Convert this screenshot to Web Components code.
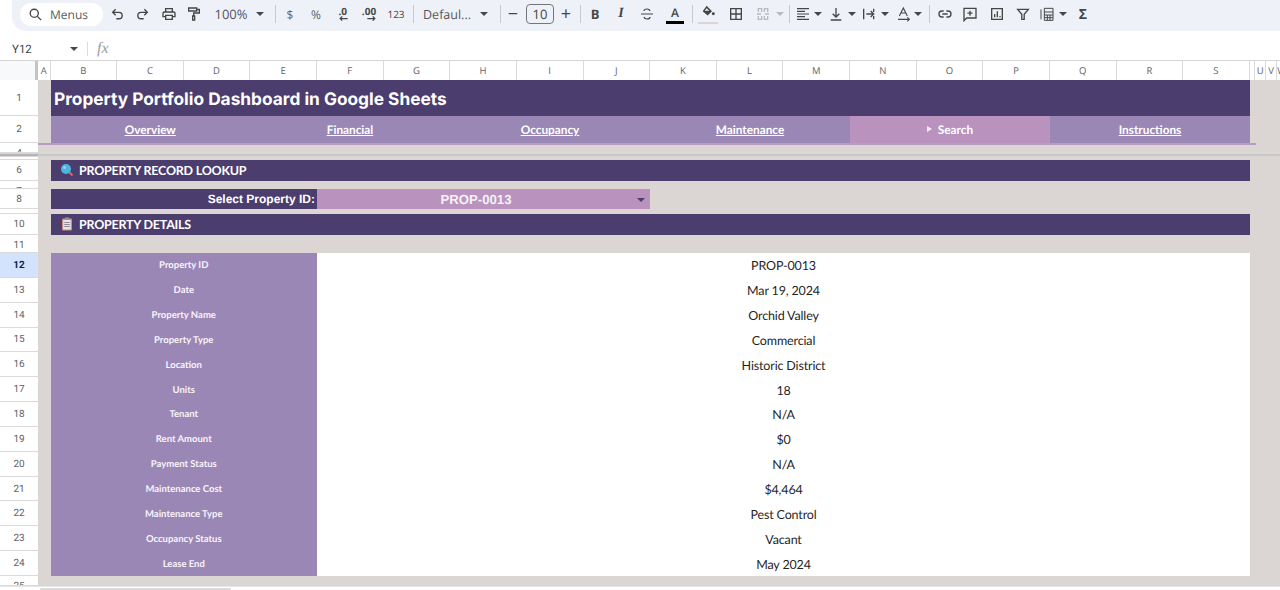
<!DOCTYPE html>
<html>
<head>
<meta charset="utf-8">
<title>Property Portfolio Dashboard</title>
<style>
  html, body { margin: 0; height: 590px; overflow: hidden; background: #fff; font-family: Roboto, "Liberation Sans", sans-serif; text-rendering: geometricPrecision; }
  body { display: flex; flex-direction: column; }
</style>
</head>
<body>
<sheet-toolbar></sheet-toolbar>
<formula-bar cell="Y12"></formula-bar>
<column-header></column-header>

<sheet-pane rows="1:36,2:27,4:10">
  <title-row>Property Portfolio Dashboard in Google Sheets</title-row>
  <nav-tabs>
    <nav-tab>Overview</nav-tab>
    <nav-tab>Financial</nav-tab>
    <nav-tab>Occupancy</nav-tab>
    <nav-tab>Maintenance</nav-tab>
    <nav-tab active>Search</nav-tab>
    <nav-tab>Instructions</nav-tab>
  </nav-tabs>
</sheet-pane>

<freeze-bar></freeze-bar>

<sheet-pane rows=":3,6:21,7:8,8:20,9:5,10:21,11:18,12:24.85,13:24.85,14:24.85,15:24.85,16:24.85,17:24.85,18:24.85,19:24.85,20:24.85,21:24.85,22:24.85,23:24.85,24:24.85,25:10" selected="12">
  <section-bar icon="search" style="margin-top:3px">PROPERTY RECORD LOOKUP</section-bar>
  <lookup-row label="Select Property ID:" value="PROP-0013" style="margin-top:8px"></lookup-row>
  <section-bar icon="clipboard" style="margin-top:5px">PROPERTY DETAILS</section-bar>
  <detail-table style="margin-top:18px">
    <detail-row label="Property ID" value="PROP-0013"></detail-row>
    <detail-row label="Date" value="Mar 19, 2024"></detail-row>
    <detail-row label="Property Name" value="Orchid Valley"></detail-row>
    <detail-row label="Property Type" value="Commercial"></detail-row>
    <detail-row label="Location" value="Historic District"></detail-row>
    <detail-row label="Units" value="18"></detail-row>
    <detail-row label="Tenant" value="N/A"></detail-row>
    <detail-row label="Rent Amount" value="$0"></detail-row>
    <detail-row label="Payment Status" value="N/A"></detail-row>
    <detail-row label="Maintenance Cost" value="$4,464"></detail-row>
    <detail-row label="Maintenance Type" value="Pest Control"></detail-row>
    <detail-row label="Occupancy Status" value="Vacant"></detail-row>
    <detail-row label="Lease End" value="May 2024"></detail-row>
  </detail-table>
</sheet-pane>

<h-scroll></h-scroll>

<script>
const INK = '#444746';
const stroke = (d, w = 1.8) => `<svg width="16" height="16" viewBox="0 0 24 24" fill="none" stroke="${INK}" stroke-width="${w}">${d}</svg>`;
const caret = (c = INK) => `<svg width="8" height="4" viewBox="0 0 8 4"><path d="M0 0h8L4 4z" fill="${c}"/></svg>`;

const ICONS = {
  undo: stroke('<path d="M10 5 5.5 9.5 10 14M5.5 9.5H15a4.8 4.8 0 0 1 0 9.6h-4"/>', 2),
  redo: stroke('<path d="M14 5l4.500 4.500L14 14M18.500 9.500H9a4.800 4.800 0 0 0 0 9.600h4"/>', 2),
  print: `<svg width="16" height="16" viewBox="0 0 24 24" fill="${INK}"><path d="M19 8h-1V3H6v5H5c-1.660 0-3 1.340-3 3v6h4v4h12v-4h4v-6c0-1.660-1.340-3-3-3zM8 5h8v3H8V5zm8 14H8v-4h8v4zm4-4h-2v-2H6v2H4v-4c0-.550.450-1 1-1h14c.550 0 1 .450 1 1v4z"/></svg>`,
  paint: stroke('<path d="M4 3h12v4.500H4zM16 5.200h4v5.300H11.500V15M10 15h3v6h-3z"/>', 2),
  borders: stroke('<path d="M4 4h16v16H4zM12 4v16M4 12h16"/>', 2),
  merge: `<svg width="16" height="16" viewBox="0 0 24 24" fill="none" stroke="#b8bbbd" stroke-width="2"><path d="M5 9V4h5v5M14 9V4h5v5M5 15v5h5v-5M14 15v5h5v-5M3 12h6M15 12h6"/></svg>`,
  align: stroke('<path d="M3 4h18M3 8h12M3 12h18M3 16h12M3 20h18"/>', 1.7),
  valign: stroke('<path d="M12 3v13M7 11.500l5 5 5-5M4 21h16"/>', 2),
  wrap: stroke('<path d="M4 4v16M19 4v5M19 15v5M8 12h11M14.500 7.500 19 12l-4.500 4.500"/>', 2),
  rotate: stroke('<path d="M5 15 11 3l6 12M7.500 10.500h7M3 20h17M17 17l3 3-3 3"/>', 1.7),
  link: stroke('<path d="M10 7.500H7.500a4.500 4.500 0 0 0 0 9H10M14 7.500h2.500a4.500 4.500 0 0 1 0 9H14M8 12h8"/>', 2),
  comment: stroke('<path d="M3 3.500h18v14.500H7l-4 4zM12 7v7.500M8.200 10.700h7.600"/>', 2),
  chart: stroke('<path d="M4 4h16v16H4zM8.500 17v-5M12.500 17V8M16.500 17v-2"/>', 2),
  filter: stroke('<path d="M4 5h16l-6.200 7.500V20h-3.600v-7.500z"/>', 2),
  functions: stroke('<path d="M3 5v15M8 3.500h13v18H8zM8 9h13M8 13.500h13M8 17.500h13M12.500 13.500v8M16.500 13.500v8"/>', 1.5),
  fill: `<svg width="16" height="13" viewBox="0 0 24 19"><path d="M10 1l8 8-6.500 6.500L4 9zM10 4.500 7 8.500h7z" fill="${INK}" fill-rule="evenodd"/><circle cx="20" cy="13" r="2.200" fill="${INK}"/></svg>`,
  strike: stroke('<path d="M16.500 7.500C16 5.500 14.300 4.500 12 4.500s-4.500 1-4.500 3M3 12h18M7.500 16.500c.5 2 2.200 3 4.500 3s4.500-1 4.500-3"/>', 1.8),
  decLeft: `<svg width="9" height="5" viewBox="0 0 10 6" fill="none" stroke="${INK}" stroke-width="1.500"><path d="M10 3H1M3.500.5 1 3l2.500 2.500"/></svg>`,
  decRight: `<svg width="9" height="5" viewBox="0 0 10 6" fill="none" stroke="${INK}" stroke-width="1.500"><path d="M0 3h9M6.500.5 9 3 6.500 5.500"/></svg>`,
};

class SheetToolbar extends HTMLElement {
  connectedCallback() {
    // each tool is [centre x on the page, width, html]; gaps are worked out from the centres
    const sep = x => [x, 1, '<i class="sep"></i>'];
    const ic = (x, name) => [x, 16, ICONS[name]];
    const drop = (x, c) => [x, 8, caret(c)];
    const txt = (x, t, w, cls = '') => [x, w, `<span class="t ${cls}">${t}</span>`];
    const tools = [
      ic(117, 'undo'), ic(143, 'redo'), ic(169, 'print'), ic(194, 'paint'),
      txt(231, '100%', 36, 'zoom'), drop(260), sep(275),
      txt(290, '$', 10, 'soft'), txt(316, '%', 12, 'soft'),
      [343, 16, `<span class="dec"><b>.0</b>${ICONS.decLeft}</span>`],
      [369, 18, `<span class="dec"><b>.00</b>${ICONS.decRight}</span>`],
      txt(396, '123', 20, 'small'), sep(413),
      txt(447, 'Defaul...', 46, 'font'), drop(484), sep(500),
      txt(513, '−', 12, 'pm'), [540, 28, '<span class="size">10</span>'], txt(566, '+', 12, 'pm'), sep(580),
      txt(595, 'B', 12, 'bold'), txt(621, 'I', 10, 'ital'), ic(647, 'strike'),
      [675, 18, '<span class="color">A</span>'], sep(692),
      [708, 20, `<span class="fill">${ICONS.fill}</span>`], ic(736, 'borders'), ic(763, 'merge'),
      drop(780, '#b8bbbd'), sep(789),
      ic(803, 'align'), drop(818), ic(836, 'valign'), drop(852), ic(869, 'wrap'), drop(885),
      ic(904, 'rotate'), drop(918), sep(929),
      ic(945, 'link'), ic(970, 'comment'), ic(997, 'chart'), ic(1023, 'filter'), ic(1047, 'functions'), drop(1063),
      txt(1083, 'Σ', 12, 'sigma'),
    ];
    let end = 103;
    const html = tools.map(([x, w, h]) => {
      const gap = x - w / 2 - end;
      end = x + w / 2;
      return `<span class="slot" style="width:${w}px;margin-left:${gap}px">${h}</span>`;
    }).join('');
    this.attachShadow({ mode: 'open' }).innerHTML = `
      <style>
        :host { display: flex; align-items: center; height: 31px; flex: none; margin-left: 12px; padding-left: 8px;
          background: #eef2f8; border-radius: 0 0 0 14px; color: ${INK}; font: 12px "Open Sans", Roboto, sans-serif; }
        .pill { display: flex; align-items: center; flex: none; width: 83px; height: 23px; margin-top: -3px; background: #fff; border-radius: 12px; box-sizing: border-box; padding-left: 8px; gap: 7px; font-size: 12px; color: #5a5d60; }
        .slot { display: flex; align-items: center; justify-content: center; flex: none; height: 26px; margin-top: -3px; }
        .sep { flex: none; width: 1px; height: 18px; background: #c7c9cc; }
        .t { white-space: nowrap; }
        .soft { color: #5f6368; }
        .zoom { font-size: 13px; color: #55585a; }
        .small { font-size: 10px; }
        .font { font-size: 12.500px; color: #55585a; }
        .pm { font-size: 18px; font-weight: 400; }
        .size { box-sizing: border-box; width: 28px; height: 20px; border: 1px solid #747775; border-radius: 4px; text-align: center; line-height: 18px; font-size: 13px; }
        .bold { font: 700 13px "Open Sans", sans-serif; }
        .ital { font: italic 700 14px "Liberation Serif", serif; }
        .sigma { font: 700 14px "Open Sans", sans-serif; }
        .dec { display: flex; flex-direction: column; align-items: flex-end; font-size: 10px; line-height: 9px; }
        .dec b { font-weight: 700; align-self: flex-start; }
        .color { box-sizing: border-box; width: 18px; height: 19px; text-align: center; font: 600 12px/15px "Open Sans", sans-serif; border-bottom: 3px solid #000; }
        .fill { display: flex; flex-direction: column; align-items: center; width: 20px; height: 19px; border-bottom: 2px solid #dcd7d4; box-sizing: border-box; }
      </style>
      <span class="pill"><svg width="15" height="15" viewBox="0 0 24 24" fill="none" stroke="${INK}" stroke-width="2.200"><circle cx="10" cy="10" r="6.500"/><path d="M15 15l6 6"/></svg>Menus</span>
      ${html}`;
  }
}

class FormulaBar extends HTMLElement {
  connectedCallback() {
    this.attachShadow({ mode: 'open' }).innerHTML = `
      <style>
        :host { display: flex; align-items: center; height: 23px; flex: none; margin-top: 6px; padding-left: 12px; background: #fff; font: 11.500px Roboto, sans-serif; color: #3c4043; }
        .cell { width: 58px; }
        .sep { width: 1px; height: 14px; background: #dadce0; margin: 0 9px 0 9px; }
        .fx { font: italic 16px "Liberation Serif", serif; color: #9a9da0; }
      </style>
      <span class="cell">${this.getAttribute('cell')}</span>${caret()}<span class="sep"></span><span class="fx">fx</span>`;
  }
}

class ColumnHeader extends HTMLElement {
  connectedCallback() {
    const letters = 'BCDEFGHIJKLMNOPQRS'.split('').map(l => `<span class="c" style="width:66.640px">${l}</span>`).join('');
    this.attachShadow({ mode: 'open' }).innerHTML = `
      <style>
        :host { display: flex; height: 20px; flex: none; box-sizing: border-box; border-top: 1px solid #d6d6d6; font: 9.500px "Open Sans", sans-serif; color: #5f6368; background: #fff; overflow: hidden; }
        .corner { width: 35px; background: #f8f9fa; border-right: 3px solid #c4c4c4; flex: none; }
        .c { display: flex; align-items: center; justify-content: center; flex: none; box-sizing: border-box; border-right: 1px solid #dadada; }
      </style>
      <span class="corner"></span>
      <span class="c" style="width:12.500px">A</span>${letters}
      <span class="c" style="width:5.500px"></span><span class="c" style="width:11px">U</span><span class="c" style="width:10.500px">V</span><span class="c" style="width:11px">W</span>`;
  }
}

class SheetPane extends HTMLElement {
  connectedCallback() {
    const selected = this.getAttribute('selected');
    const heads = this.getAttribute('rows').split(',').map(r => {
      const [n, h] = r.split(':');
      return `<div class="r ${n === selected ? 'sel' : ''}" style="height:${h}px"><span style="height:${Math.max(+h, 21)}px">${n}</span></div>`;
    }).join('');
    this.attachShadow({ mode: 'open' }).innerHTML = `
      <style>
        :host { display: flex; flex: none; background: #dbd6d4; }
        .heads { width: 38px; flex: none; background: #fff; font: 10px Roboto, sans-serif; color: #5f6368; }
        .r { box-sizing: border-box; overflow: hidden; border-bottom: 1px solid #dadada; text-align: center; }
        .r span { display: flex; align-items: center; justify-content: center; }
        .sel { background: #d3e3fd; color: #0b1f3f; font-weight: 700; }
        main { display: flex; flex-direction: column; width: 1199.500px; margin-left: 12.500px; flex: none; }
      </style>
      <div class="heads">${heads}</div>
      <main><slot></slot></main>`;
  }
}

class TitleRow extends HTMLElement {
  connectedCallback() {
    this.attachShadow({ mode: 'open' }).innerHTML = `
      <style>
        :host { display: flex; align-items: center; box-sizing: border-box; height: 36px; padding: 2px 0 0 3.500px; background: #4b3d6e; color: #fff; font: 700 17.300px Inter, Lato, sans-serif; white-space: nowrap; }
      </style><slot></slot>`;
  }
}

class NavTabs extends HTMLElement {
  connectedCallback() {
    this.attachShadow({ mode: 'open' }).innerHTML = `
      <style>
        :host { display: block; }
        .tabs { display: grid; grid-template-columns: 199.500px repeat(5, 200px); height: 27px; background: #9b87b6; }
        .rule { height: 2px; width: 1217.500px; margin-left: -12.500px; background: #b49cc2; }
      </style>
      <div class="tabs"><slot></slot></div><div class="rule"></div>`;
  }
}

class NavTab extends HTMLElement {
  connectedCallback() {
    const active = this.hasAttribute('active');
    this.attachShadow({ mode: 'open' }).innerHTML = `
      <style>
        :host { display: flex; align-items: center; justify-content: center; gap: 6px; color: #fff; font: 700 11.800px Lato, "Open Sans", sans-serif; }
        :host([active]) { background: #b992bd; }
        .txt { text-decoration: underline; }
        :host([active]) .txt { text-decoration: none; }
        svg { margin-top: -1px; }
      </style>
      ${active ? '<svg width="5" height="6" viewBox="0 0 5 6"><path d="M0 0l5 3-5 3z" fill="#f2ecf6"/></svg>' : ''}<span class="txt"><slot></slot></span>`;
  }
}

class FreezeBar extends HTMLElement {
  connectedCallback() {
    this.attachShadow({ mode: 'open' }).innerHTML = `
      <style>
        :host { display: block; height: 4px; flex: none;
          background: linear-gradient(90deg, #b4b4b4 0 38px, transparent 38px) 0 1px / 100% 2px no-repeat,
            linear-gradient(#dbd6d4 0 1px, #c6c8c6 1px 3px, #dbd6d4 3px); }
      </style>`;
  }
}

const SECTION_ICONS = {
  search: `<svg width="14" height="14" viewBox="0 0 14 14"><path d="M8.500 8.500 12.500 12.500" stroke="#c96a7c" stroke-width="2.200"/><circle cx="6" cy="6" r="5" fill="#4cb6e0"/><circle cx="4.500" cy="4.500" r="1.500" fill="#8ed8f0"/></svg>`,
  clipboard: `<svg width="14" height="14" viewBox="0 0 14 14"><rect x="2" y="1.500" width="10" height="12" rx="1" fill="#c98d80"/><rect x="3.200" y="3" width="7.600" height="9.500" fill="#e8e4e4"/><rect x="5" y=".5" width="4" height="2.500" fill="#9c8f8f"/><path d="M4.200 5.500h5.600M4.200 7.500h5.600M4.200 9.500h5.600" stroke="#8d8a96"/></svg>`,
};

class SectionBar extends HTMLElement {
  connectedCallback() {
    this.attachShadow({ mode: 'open' }).innerHTML = `
      <style>
        :host { display: flex; align-items: center; gap: 5px; box-sizing: border-box; height: 21px; padding: 0 0 1px 9.500px; background: #4b3d6e; color: #fff; font: 700 12.500px Lato, "Open Sans", sans-serif; letter-spacing: -.23px; }
      </style>
      ${SECTION_ICONS[this.getAttribute('icon')]}<span><slot></slot></span>`;
  }
}

class LookupRow extends HTMLElement {
  connectedCallback() {
    this.attachShadow({ mode: 'open' }).innerHTML = `
      <style>
        :host { display: flex; height: 20px; color: #fff; font: 700 12px "Liberation Sans", Arial, sans-serif; }
        .label { display: flex; align-items: center; justify-content: flex-end; width: 266.500px; box-sizing: border-box; padding-right: 2px; background: #4b3d6e; }
        .value { position: relative; display: flex; align-items: center; justify-content: center; width: 333px; box-sizing: border-box; padding-right: 15px; background: #b992bd; font-size: 13.200px; color: #f6f0f7; }
        .value svg { position: absolute; right: 5px; top: 9px; }
      </style>
      <span class="label">${this.getAttribute('label')}</span>
      <span class="value">${this.getAttribute('value')}${caret('#4b3d6e')}</span>`;
  }
}

class DetailTable extends HTMLElement {
  connectedCallback() {
    this.attachShadow({ mode: 'open' }).innerHTML = `
      <style>:host { display: grid; grid-template-columns: 266.500px 933px; grid-auto-rows: 24.850px; }</style><slot></slot>`;
  }
}

class DetailRow extends HTMLElement {
  connectedCallback() {
    this.attachShadow({ mode: 'open' }).innerHTML = `
      <style>
        :host { display: grid; grid-template-columns: subgrid; grid-column: 1 / -1; }
        span { display: flex; align-items: center; justify-content: center; }
        .label { background: #9b87b6; color: #f7f4fa; font: 700 9.500px Lato, "Open Sans", sans-serif; padding-top: 1px; }
        .value { background: #fff; color: #1f1f1f; font: 12.500px Lato, sans-serif; letter-spacing: -.15px; padding-top: 1px; }
      </style>
      <span class="label">${this.getAttribute('label')}</span>
      <span class="value">${this.getAttribute('value')}</span>`;
  }
}

class HScroll extends HTMLElement {
  connectedCallback() {
    this.attachShadow({ mode: 'open' }).innerHTML = `
      <style>
        :host { display: block; height: 4px; flex: none; padding: 1px 0 0 40px; background: #fff; border-top: 1px solid #e6e6e6; }
        div { width: 191px; height: 3px; background: #dadada; border-radius: 2px; }
      </style><div></div>`;
  }
}

const elements = {
  'sheet-toolbar': SheetToolbar, 'formula-bar': FormulaBar, 'column-header': ColumnHeader, 'sheet-pane': SheetPane,
  'title-row': TitleRow, 'nav-tabs': NavTabs, 'nav-tab': NavTab, 'freeze-bar': FreezeBar, 'section-bar': SectionBar,
  'lookup-row': LookupRow, 'detail-table': DetailTable, 'detail-row': DetailRow, 'h-scroll': HScroll,
};
Object.keys(elements).forEach(name => customElements.define(name, elements[name]));
</script>
</body>
</html>
